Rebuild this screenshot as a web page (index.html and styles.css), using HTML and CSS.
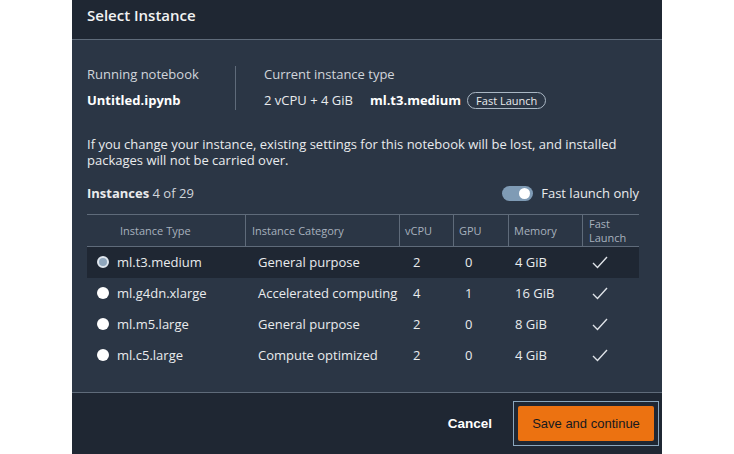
FILE: index.html
```html
<!DOCTYPE html>
<html>
<head>
<meta charset="utf-8">
<link rel="stylesheet" href="styles.css">
</head>
<body>
<div class="modal">
  <div class="modal-header">Select Instance</div>
  <div class="modal-body">
    <div class="info">
      <div class="info-col first">
        <div class="label">Running notebook</div>
        <div class="value strong">Untitled.ipynb</div>
      </div>
      <div class="info-col second">
        <div class="label">Current instance type</div>
        <div class="value"><span>2 vCPU + 4 GiB</span><span class="strong type">ml.t3.medium</span><span class="badge">Fast Launch</span></div>
      </div>
    </div>
    <p class="note">If you change your instance, existing settings for this notebook will be lost, and installed packages will not be carried over.</p>
    <div class="toolbar">
      <div class="count"><b>Instances</b> 4 of 29</div>
      <div class="toggle-wrap"><span class="toggle"><span class="knob"></span></span><span>Fast launch only</span></div>
    </div>
    <div class="table">
      <div class="th c1">Instance Type</div>
      <div class="th c2">Instance Category</div>
      <div class="th c3">vCPU</div>
      <div class="th c4">GPU</div>
      <div class="th c5">Memory</div>
      <div class="th c6 last">Fast<br>Launch</div>

      <div class="row selected">
        <div class="td c1"><span class="radio on"></span>ml.t3.medium</div>
        <div class="td c2">General purpose</div>
        <div class="td c3">2</div>
        <div class="td c4">0</div>
        <div class="td c5">4 GiB</div>
        <div class="td c6"><svg class="check" width="16" height="13" viewBox="0 0 16 13"><path d="M1 7 L5.5 11.5 L15 1" fill="none" stroke="#dfe3e8" stroke-width="1.4"/></svg></div>
      </div>
      <div class="row">
        <div class="td c1"><span class="radio"></span>ml.g4dn.xlarge</div>
        <div class="td c2">Accelerated computing</div>
        <div class="td c3">4</div>
        <div class="td c4">1</div>
        <div class="td c5">16 GiB</div>
        <div class="td c6"><svg class="check" width="16" height="13" viewBox="0 0 16 13"><path d="M1 7 L5.5 11.5 L15 1" fill="none" stroke="#dfe3e8" stroke-width="1.4"/></svg></div>
      </div>
      <div class="row">
        <div class="td c1"><span class="radio"></span>ml.m5.large</div>
        <div class="td c2">General purpose</div>
        <div class="td c3">2</div>
        <div class="td c4">0</div>
        <div class="td c5">8 GiB</div>
        <div class="td c6"><svg class="check" width="16" height="13" viewBox="0 0 16 13"><path d="M1 7 L5.5 11.5 L15 1" fill="none" stroke="#dfe3e8" stroke-width="1.4"/></svg></div>
      </div>
      <div class="row">
        <div class="td c1"><span class="radio"></span>ml.c5.large</div>
        <div class="td c2">Compute optimized</div>
        <div class="td c3">2</div>
        <div class="td c4">0</div>
        <div class="td c5">4 GiB</div>
        <div class="td c6"><svg class="check" width="16" height="13" viewBox="0 0 16 13"><path d="M1 7 L5.5 11.5 L15 1" fill="none" stroke="#dfe3e8" stroke-width="1.4"/></svg></div>
      </div>
    </div>
  </div>
  <div class="modal-footer">
    <button class="btn-cancel">Cancel</button>
    <span class="focus-ring"><button class="btn-primary">Save and continue</button></span>
  </div>
</div>
</body>
</html>
```

FILE: styles.css
```css
* { box-sizing: border-box; }
html, body { margin: 0; padding: 0; background: #ffffff; }
body { width: 734px; height: 454px; overflow: hidden; }

.modal {
  margin-left: 72px;
  width: 590px;
  height: 454px;
  display: flex;
  flex-direction: column;
  font-family: "Open Sans", "Noto Sans", sans-serif;
  font-size: 13px;
  color: #e9ebed;
  background: #2b3645;
}

.modal-header {
  height: 40px;
  background: #1f2733;
  border-bottom: 1px solid #5f6b7a;
  padding: 5px 15px 0;
  font-size: 15px;
  font-weight: 600;
  color: #f2f3f3;
  line-height: 20px;
}

.modal-body {
  flex: 1;
  padding: 26px 23px 0 15px;
}

.info { display: flex; }
.info-col { display: flex; flex-direction: column; gap: 9px; }
.info-col.first { width: 149px; border-right: 1px solid #5f6b7a; }
.info-col.second { padding-left: 28px; }
.label { line-height: 16px; color: #d1d5db; }
.value { line-height: 19px; display: flex; align-items: center; }
.strong { font-weight: 700; color: #ffffff; }
.type { margin-left: 17px; }
.badge {
  margin-left: 6px;
  height: 17px;
  border: 1px solid #aab7c4;
  border-radius: 9px;
  padding: 0 8px;
  font-size: 11px;
  line-height: 15px;
  color: #e9ebed;
}

.note {
  margin: 26px 0 0;
  line-height: 16px;
  color: #e9ebed;
}

.toolbar {
  margin-top: 15px;
  height: 20px;
  display: flex;
  align-items: center;
  justify-content: space-between;
}
.count { color: #d1d5db; }
.count b { color: #e9ebed; font-weight: 700; }
.toggle-wrap { display: flex; align-items: center; gap: 8px; color: #e9ebed; }
.toggle {
  width: 31px; height: 15px;
  border-radius: 8px;
  background: #7f9bb5;
  display: flex; align-items: center; justify-content: flex-end;
  padding: 0 3px;
}
.knob { width: 11px; height: 11px; border-radius: 50%; background: #ffffff; }

.table {
  margin-top: 11px;
  display: grid;
  grid-template-columns: 159px 154px 54px 55px 74px 56px;
  border-top: 1px solid #5f6b7a;
}
.th {
  height: 32px;
  border-bottom: 1px solid #5f6b7a;
  border-right: 1px solid #5f6b7a;
  font-size: 11px;
  line-height: 14px;
  color: #a7b1bd;
  display: flex;
  align-items: center;
}
.th.last { border-right: none; }
.th.c1 { padding-left: 33px; }
.th.c2 { padding-left: 6px; }
.th.c3 { padding-left: 5px; }
.th.c4 { padding-left: 5px; }
.th.c5 { padding-left: 5px; }
.th.c6 { padding-left: 6px; }

.row { display: contents; }
.td {
  height: 31px;
  padding-bottom: 1px;
  display: flex;
  align-items: center;
  color: #e9ebed;
}
.row.selected .td { background: #1f2733; }
.td.c1 { padding-left: 10px; }
.td.c2 { padding-left: 12px; }
.td.c3 { padding-left: 13px; }
.td.c4 { padding-left: 11px; }
.td.c5 { padding-left: 6px; }
.td.c6 { padding-left: 9px; }

.radio {
  width: 12px; height: 12px;
  border-radius: 50%;
  background: #ffffff;
  margin-right: 8px;
  flex: none;
}
.radio.on {
  background: #8fa6bc;
  border: 2px solid #dfe6ee;
}

.modal-footer {
  height: 62px;
  background: #1f2733;
  border-top: 1px solid #5f6b7a;
  display: flex;
  align-items: center;
  justify-content: flex-end;
  padding-right: 3px;
  padding-bottom: 1px;
}
.btn-cancel {
  background: none;
  border: none;
  font-family: "Liberation Sans", Arial, sans-serif;
  font-weight: 700;
  font-size: 13.5px;
  color: #ffffff;
  padding: 0;
  margin-right: 21px;
}
.focus-ring {
  border: 1px solid #8aa6bd;
  padding: 4px;
  display: flex;
}
.btn-primary {
  width: 136px;
  height: 35px;
  background: #ec7211;
  border: none;
  border-radius: 2px;
  font-family: "Liberation Sans", Arial, sans-serif;
  font-size: 13px;
  color: #16191f;
  padding: 0;
}
```
